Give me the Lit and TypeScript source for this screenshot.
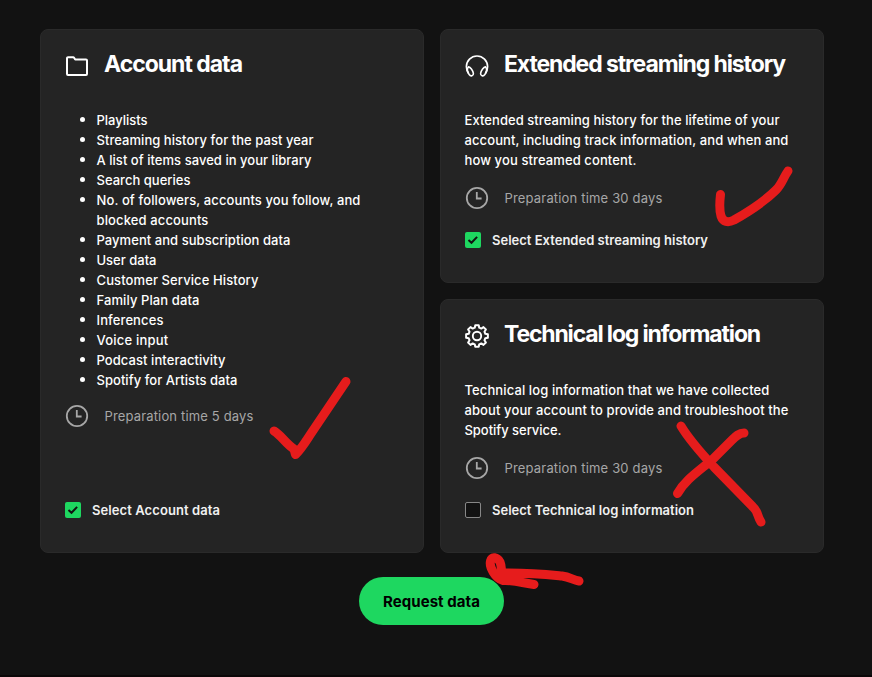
import { LitElement, html, css, svg, nothing } from "lit";
import { customElement, property } from "lit/decorators.js";

type IconName = "folder" | "headphones" | "gear";

interface Line {
  text: string;
  width: number;
  continued?: boolean;
}

const line = (text: string, width: number, continued = false): Line => ({ text, width, continued });

const gearPath = (() => {
  const pts: string[] = [];
  const n = 8;
  const p = (r: number, deg: number) => {
    const a = (deg * Math.PI) / 180;
    return `${(12 + r * Math.cos(a)).toFixed(2)} ${(12 + r * Math.sin(a)).toFixed(2)}`;
  };
  for (let i = 0; i < n; i++) {
    const c = i * (360 / n) - 90;
    pts.push(`${i ? "L" : "M"}${p(8.6, c - 15)}`, `L${p(11, c - 9)}`, `L${p(11, c + 9)}`, `L${p(8.6, c + 15)}`);
  }
  return pts.join(" ") + "Z";
})();

const icons = {
  folder: svg`<path d="M2 4.2a1 1 0 0 1 1-1h5.2a1 1 0 0 1 .85.47L10.2 5.6H21a1 1 0 0 1 1 1V20a1 1 0 0 1-1 1H3a1 1 0 0 1-1-1z"/>`,
  headphones: svg`<path d="M3.6 19.4C2.1 17.6 1.4 15.2 1.4 12.6a10.6 10.6 0 0 1 21.2 0c0 2.600-.7 5-2.200 6.800" stroke-width="1.7"/>
    <path d="M3.500 12.700c1.800.4 4.300 3.600 4.900 6.700.3 2.500-2.800 3.400-4.100 1.300-1.900-2.700-2.300-6.300-.8-8zM20.500 12.700c-1.800.4-4.300 3.600-4.900 6.700-.3 2.500 2.800 3.400 4.100 1.300 1.900-2.700 2.300-6.300.8-8z" stroke-width="1.6"/>`,
  gear: svg`<path d=${gearPath} stroke-width="2"/><circle cx="12" cy="12" r="4.200" stroke-width="1.900"/>`,
};

/** One line of text, tracked so that it fills its measured width. */
@customElement("fit-text")
export class FitText extends LitElement {
  @property() text = "";
  @property({ type: Number }) width = 0;

  static styles = css`
    :host { display: inline-block; white-space: nowrap; }
  `;

  render() {
    return html`<span>${this.text}</span>`;
  }

  async firstUpdated() {
    await document.fonts.ready;
    const span = this.renderRoot.querySelector("span")!;
    const spacing = (this.width - span.getBoundingClientRect().width) / this.text.length;
    span.style.letterSpacing = `${spacing}px`;
  }
}

@customElement("data-card")
export class DataCard extends LitElement {
  @property() icon: IconName = "folder";
  @property({ attribute: false }) heading = line("", 0);
  @property({ attribute: false }) lines: Line[] = [];
  @property({ type: Boolean }) list = false;
  @property({ attribute: false }) prep = line("", 0);
  @property({ attribute: false }) option = line("", 0);
  @property({ type: Boolean }) checked = false;

  static styles = css`
    :host {
      display: flex; flex-direction: column; box-sizing: border-box;
      padding: 20px 24px 32px; border: 1px solid #2a2a2a; border-radius: 8px;
      background: #242424; color: #fff;
    }
    svg { display: block; flex: none; }
    header { display: flex; gap: 15px; height: 60px; }
    header svg { margin-top: 4px; }
    h2 { margin: 0; font-size: 23px; line-height: 28px; font-weight: 700; }
    .copy { margin: 0 0 0 -0.5px; font-size: 13px; line-height: 20px; font-weight: 500; }
    .row { display: flex; align-items: center; height: 20px; }
    .list .row { padding-left: 14px; }
    .bullet { width: 5.5px; height: 5.5px; border-radius: 50%; background: #fff; margin: 0 11.500px 1px 1px; }
    .bullet.none { background: none; }
    .prep { display: flex; align-items: center; gap: 15.500px; margin-top: 16px; color: #a7a7a7; font-size: 13px; line-height: 20px; height: 24px; }
    :host([list]) .prep { margin-top: 14px; }
    .option { display: flex; align-items: center; gap: 11px; height: 20px; margin-top: auto; font-size: 13px; line-height: 20px; font-weight: 600; color: #f1f1f1; }
    .box { box-sizing: border-box; width: 16px; height: 16px; border: 1px solid #878787; border-radius: 2px; background: #121212; }
    .box.on { border: 0; background: #1ed760; }
  `;

  render() {
    return html`
      <header>
        <svg width="24" height="24" viewBox="0 0 24 24" fill="none" stroke="#fff" stroke-width="2" stroke-linejoin="round">${icons[this.icon]}</svg>
        <h2><fit-text .text=${this.heading.text} .width=${this.heading.width}></fit-text></h2>
      </header>
      <div class="copy ${this.list ? "list" : ""}">
        ${this.lines.map(
          (l) => html`<div class="row">
            ${this.list ? html`<span class="bullet ${l.continued ? "none" : ""}"></span>` : nothing}
            <fit-text .text=${l.text} .width=${l.width}></fit-text>
          </div>`
        )}
      </div>
      <div class="prep">
        <svg width="24" height="24" viewBox="0 0 24 24" fill="none" stroke="#a7a7a7">
          <circle cx="12" cy="12" r="10.2" stroke-width="1.8"/>
          <path d="M11.800 6v6.500h4.800" stroke-width="1.8"/>
        </svg>
        <fit-text .text=${this.prep.text} .width=${this.prep.width}></fit-text>
      </div>
      <label class="option">
        <span class="box ${this.checked ? "on" : ""}">
          ${this.checked
            ? html`<svg width="16" height="16" viewBox="0 0 16 16" fill="none" stroke="#121212" stroke-width="2"><path d="M3.5 8.1l3 2.700 5.600-5.900"/></svg>`
            : nothing}
        </span>
        <fit-text .text=${this.option.text} .width=${this.option.width}></fit-text>
      </label>
    `;
  }
}

@customElement("app-root")
export class AppRoot extends LitElement {
  static styles = css`
    :host {
      display: flex; flex-direction: column; align-items: center; position: relative;
      box-sizing: border-box; width: 872px; height: 677px; padding-top: 29px; overflow: hidden;
      background: #121212; font-family: Inter, "Liberation Sans", sans-serif;
    }
    .cards { display: grid; grid-template-columns: 384px 384px; grid-template-rows: 254px 254px; gap: 16px; margin-right: 8px; }
    .tall { grid-row: span 2; }
    button {
      width: 145px; height: 48px; margin: 24px 9px 0 0; padding: 2px 0 0; border: 0; border-radius: 24px;
      background: #1ed760; color: #000; font: 700 15px/24px Inter, sans-serif;
    }
    .edge { align-self: stretch; height: 2px; margin-top: auto; background: #0b0708; }
    .marks { position: absolute; inset: 0; pointer-events: none; }
  `;

  render() {
    return html`
      <div class="cards">
        <data-card class="tall" icon="folder" list checked
          .heading=${line("Account data", 138)}
          .lines=${[
            line("Playlists", 51),
            line("Streaming history for the past year", 217),
            line("A list of items saved in your library", 215),
            line("Search queries", 94),
            line("No. of followers, accounts you follow, and", 264),
            line("blocked accounts", 112, true),
            line("Payment and subscription data", 194),
            line("User data", 60),
            line("Customer Service History", 162),
            line("Family Plan data", 103),
            line("Inferences", 67),
            line("Voice input", 72),
            line("Podcast interactivity", 129),
            line("Spotify for Artists data", 141),
          ]}
          .prep=${line("Preparation time 5 days", 149)}
          .option=${line("Select Account data", 128)}></data-card>
        <data-card icon="headphones" checked
          .heading=${line("Extended streaming history", 281)}
          .lines=${[
            line("Extended streaming history for the lifetime of your", 315),
            line("account, including track information, and when and", 324),
            line("how you streamed content.", 172),
          ]}
          .prep=${line("Preparation time 30 days", 158)}
          .option=${line("Select Extended streaming history", 216)}></data-card>
        <data-card icon="gear"
          .heading=${line("Technical log information", 256)}
          .lines=${[
            line("Technical log information that we have collected", 305),
            line("about your account to provide and troubleshoot the", 324),
            line("Spotify service.", 97),
          ]}
          .prep=${line("Preparation time 30 days", 158)}
          .option=${line("Select Technical log information", 202)}></data-card>
      </div>
      <button><fit-text .text=${"Request data"} .width=${97}></fit-text></button>
      <div class="edge"></div>
      <svg class="marks" width="872" height="677" viewBox="0 0 872 677" fill="none" stroke="#e61c1c" stroke-width="9" stroke-linecap="round" stroke-linejoin="round">
        <path d="M274 431C281 435 285 443 294 449L295.500 454.500C302 448 306 441 310 435L346 381.500"/>
        <path d="M720.500 194.500C719.500 203 719.500 211 721 216C723 222 728 223 734 220C750 211 764 202 776 190C782 184 783 178 788 171"/>
        <path d="M681 426C690 441 701 453 714 467L753 507C758 511 757 516 761 522"/>
        <path d="M744 433C739 433 736 436 732 440L713 459C699 471 685 480 677.500 493.500"/>
        <path d="M534 584.500C523 583 515 580 503 580.500C495 578 489 567 490.500 561C492 556 497 557 500 562C502 567 501 570 502 573C531 572.500 552 575 562 576C570 577 573 580 579 581"/>
      </svg>
    `;
  }
}
